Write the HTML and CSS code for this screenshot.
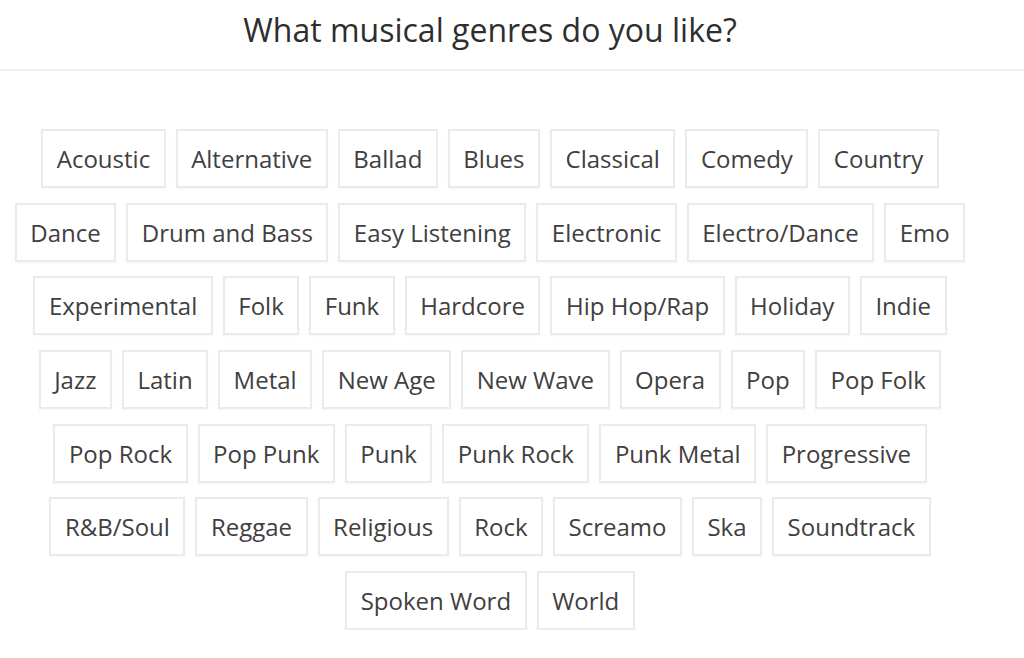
FILE: index.html
```html
<!DOCTYPE html>
<html lang="en">
<head>
    <meta charset="UTF-8">
    <meta name="viewport" content="width=device-width, initial-scale=1.0">
    <title>Genres</title>
    <link rel="stylesheet" href="styles.css">
</head>
<body>
    <header>
        <h1>What musical genres do you like?</h1>
    </header>
    <div class="container">
        <ul class="genres">
            <li class="genre">Acoustic</li>
            <li class="genre">Alternative</li>
            <li class="genre">Ballad</li>
            <li class="genre">Blues</li>
            <li class="genre">Classical</li>
            <li class="genre">Comedy</li>
            <li class="genre">Country</li>
            <li class="genre">Dance</li>
            <li class="genre">Drum and Bass</li>
            <li class="genre">Easy Listening</li>
            <li class="genre">Electronic</li>
            <li class="genre">Electro/Dance</li>
            <li class="genre">Emo</li>
            <li class="genre">Experimental</li>
            <li class="genre">Folk</li>
            <li class="genre">Funk</li>
            <li class="genre">Hardcore</li>
            <li class="genre">Hip Hop/Rap</li>
            <li class="genre">Holiday</li>
            <li class="genre">Indie</li>
            <li class="genre">Jazz</li>
            <li class="genre">Latin</li>
            <li class="genre">Metal</li>
            <li class="genre">New Age</li>
            <li class="genre">New Wave</li>
            <li class="genre">Opera</li>
            <li class="genre">Pop</li>
            <li class="genre">Pop Folk</li>
            <li class="genre">Pop Rock</li>
            <li class="genre">Pop Punk</li>
            <li class="genre">Punk</li>
            <li class="genre">Punk Rock</li>
            <li class="genre">Punk Metal</li>
            <li class="genre">Progressive</li>
            <li class="genre">R&amp;B/Soul</li>
            <li class="genre">Reggae</li>
            <li class="genre">Religious</li>
            <li class="genre">Rock</li>
            <li class="genre">Screamo</li>
            <li class="genre">Ska</li>
            <li class="genre">Soundtrack</li>
            <li class="genre">Spoken Word</li>
            <li class="genre">World</li>
        </ul>
    </div>
</body>
</html>
```

FILE: styles.css
```css
body {
    font-family: 'Open Sans', 'Noto Sans', sans-serif;
    margin: 0;
    padding: 0;
    background-color: #fff;
    color: #3a3a3a;
}
header {
    border-bottom: 2px solid #f0f0f0;
    height: 69px;
}
header h1 {
    width: 980px;
    margin: 0;
    padding-top: 8px;
    text-align: center;
    font-size: 32px;
    font-weight: 400;
    line-height: 44px;
    color: #2e2e2e;
}
.container {
    width: 960px;
    margin-left: 10px;
    padding-top: 58px;
}
.genres {
    list-style: none;
    margin: 0;
    padding: 0;
    display: flex;
    flex-wrap: wrap;
    justify-content: center;
    gap: 14.7px 10px;
}
.genre {
    padding: 12px 13.5px;
    border: 2px solid #ebebeb;
    box-shadow: 0 1px 2px rgba(0,0,0,0.04);
    font-size: 24px;
    line-height: 31px;
    color: #404040;
}
```
